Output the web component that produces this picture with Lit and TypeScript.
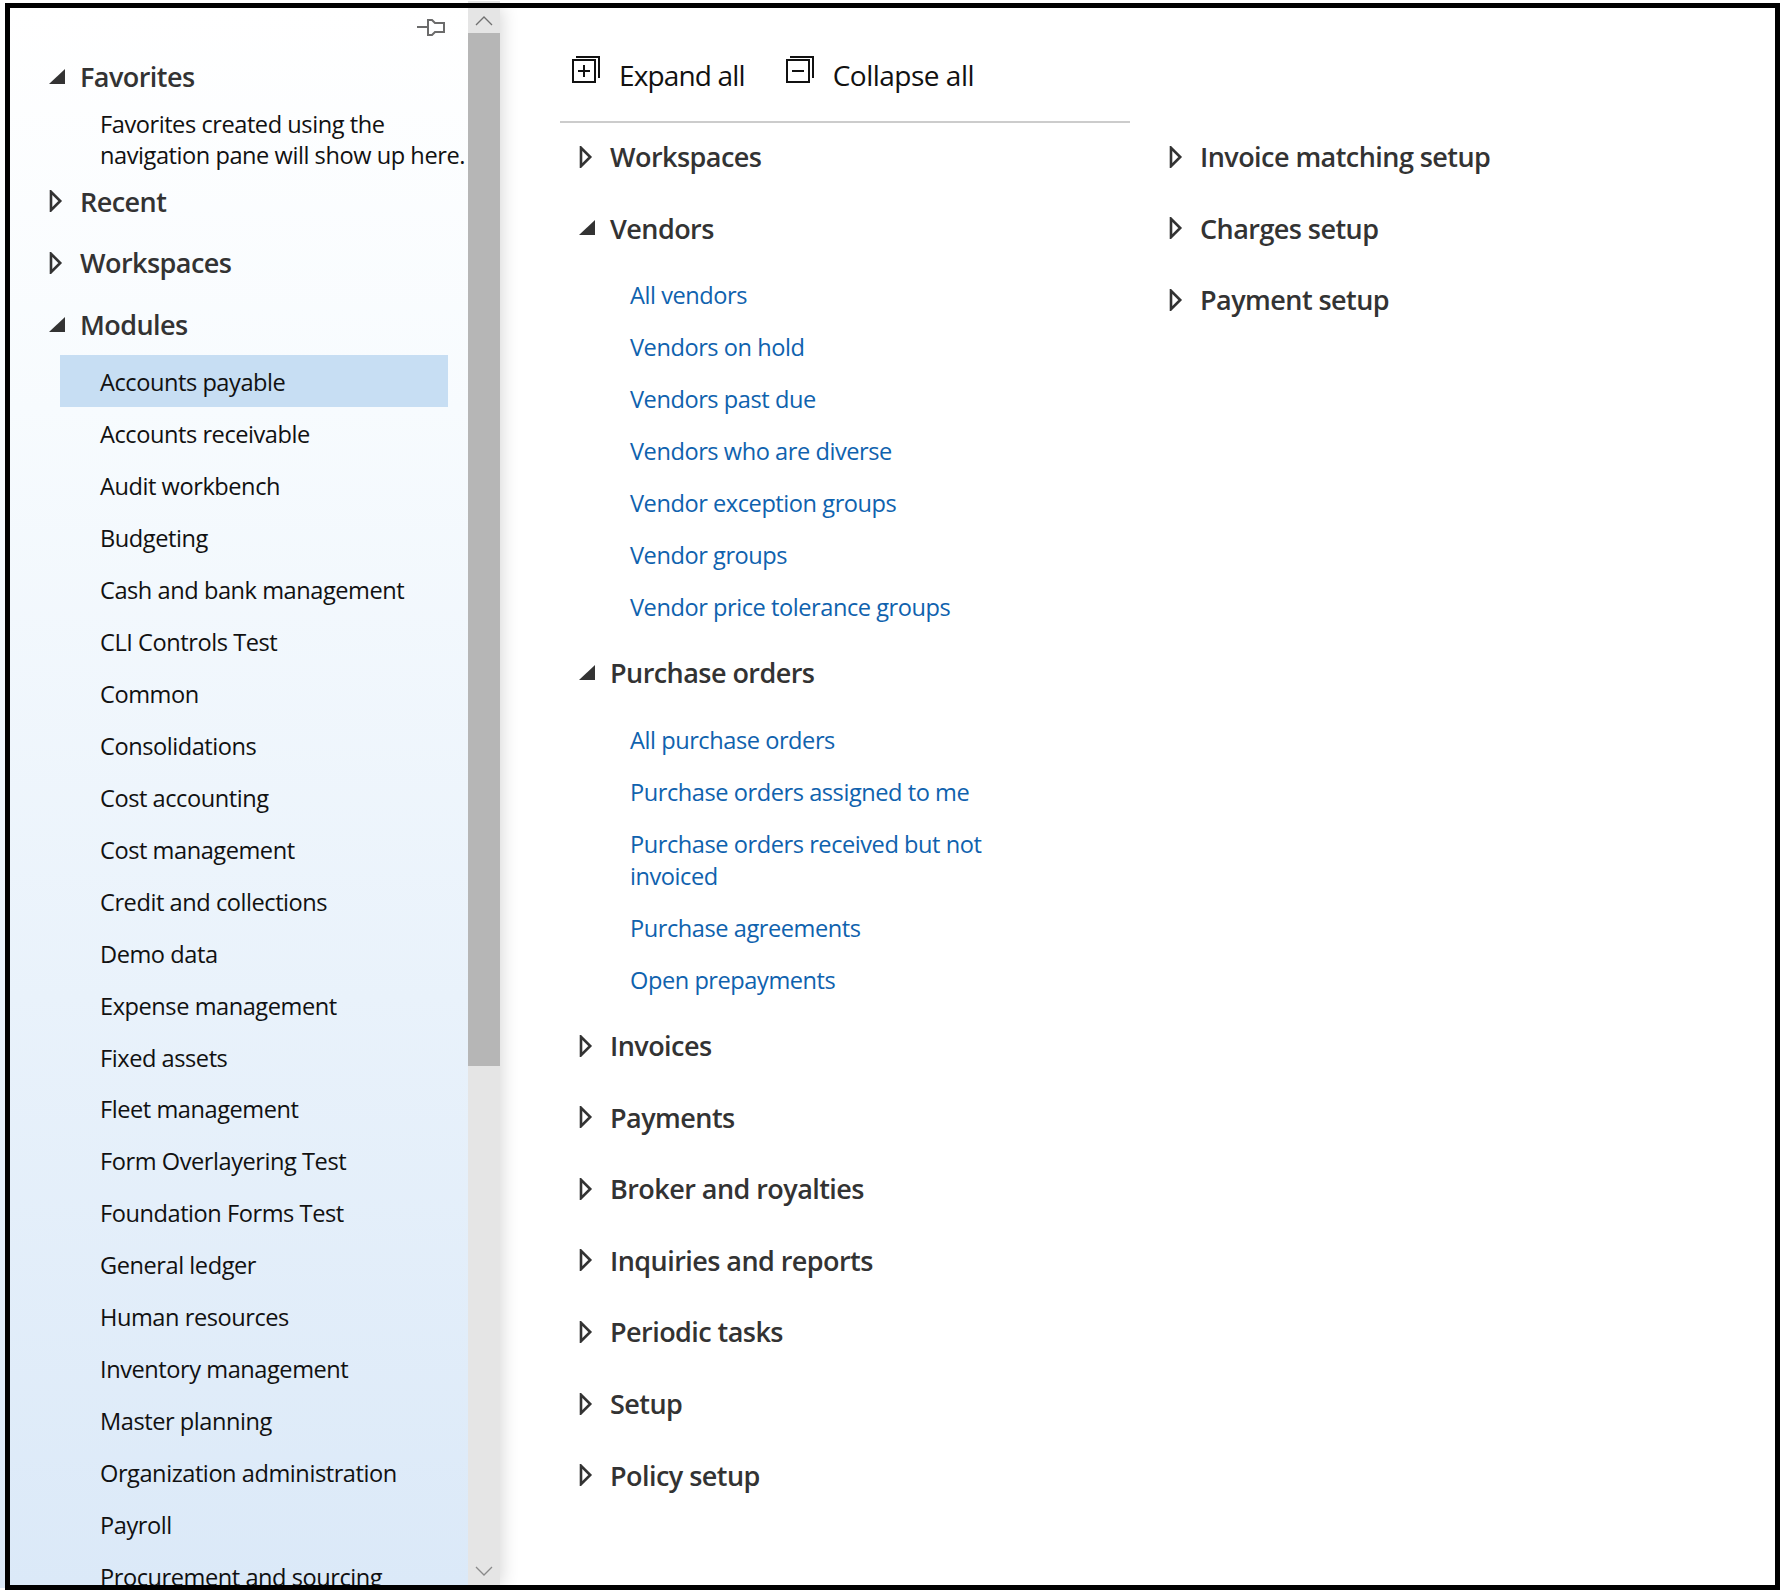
import { LitElement, html, css, svg } from "lit";
import { customElement } from "lit/decorators.js";

const modules = [
  "Accounts payable", "Accounts receivable", "Audit workbench", "Budgeting",
  "Cash and bank management", "CLI Controls Test", "Common", "Consolidations",
  "Cost accounting", "Cost management", "Credit and collections", "Demo data",
  "Expense management", "Fixed assets", "Fleet management", "Form Overlayering Test",
  "Foundation Forms Test", "General ledger", "Human resources", "Inventory management",
  "Master planning", "Organization administration", "Payroll", "Procurement and sourcing",
];

const vendors = [
  "All vendors", "Vendors on hold", "Vendors past due", "Vendors who are diverse",
  "Vendor exception groups", "Vendor groups", "Vendor price tolerance groups",
];

const purchaseOrders = [
  "All purchase orders", "Purchase orders assigned to me",
  "Purchase orders received but not invoiced", "Purchase agreements", "Open prepayments",
];

const arrowRight = svg`<svg class="arrow" width="16" height="22" viewBox="0 0 16 22"><path d="M2 1.8 L2 20.2 L11.2 11 Z" fill="none" stroke="#333" stroke-width="2.6"/></svg>`;
const arrowDown = svg`<svg class="arrow" width="16" height="22" viewBox="0 0 16 22"><path d="M0 18 L16 18 L16 3 Z" fill="#333"/></svg>`;

@customElement("app-root")
export class AppRoot extends LitElement {
  static styles = css`
    :host {
      display: block;
      width: 1780px;
      height: 1593px;
      background: #fff;
      font-family: "Open Sans", "Noto Sans", sans-serif;
    }
    * { box-sizing: border-box; }
    .page { display: flex; height: 1593px; position: relative; }
    .edge {
      width: 5px;
      height: 1588px;
      background: linear-gradient(#fff 0, #f7fbfe 400px, #dbe9f8 100%);
    }
    .scroll-tip {
      position: absolute;
      left: 468px;
      top: 1px;
      width: 32px;
      height: 2px;
      background: #e5e5e5;
    }
    .frame {
      flex: 1;
      margin: 3px 0;
      border: 5px solid #000;
      display: flex;
      overflow: hidden;
    }
    .pane {
      width: 490px;
      flex: none;
      display: flex;
      position: relative;
      z-index: 1;
      box-shadow: 2px 0 16px rgba(0, 0, 0, 0.16);
    }
    .nav {
      width: 458px;
      overflow: hidden;
      background: linear-gradient(#fff 0, #f7fbfe 400px, #dbe9f8 100%);
    }
    .pin-row {
      height: 38px;
      display: flex;
      align-items: center;
      justify-content: flex-end;
      padding: 0 22px 1px 0;
    }
    .nav-head {
      height: 61.6px;
      display: flex;
      align-items: center;
      padding-left: 39px;
      font-size: 27px;
      font-weight: 600;
      color: #333;
      letter-spacing: -0.55px;
      white-space: nowrap;
    }
    .nav-head .arrow { margin-right: 15px; flex: none; }
    .note {
      padding: 1px 0 0 90px;
      font-size: 23.6px;
      line-height: 31px;
      color: #111;
      white-space: nowrap;
      letter-spacing: -0.45px;
    }
    .item {
      height: 51.95px;
      margin: 0 20px 0 50px;
      padding: 2px 0 0 40px;
      display: flex;
      align-items: center;
      font-size: 23.6px;
      color: #111;
      white-space: nowrap;
      letter-spacing: -0.45px;
    }
    .item.selected { background: #c7def3; }
    .scrollbar {
      width: 32px;
      flex: none;
      display: flex;
      flex-direction: column;
      background: #e5e5e5;
    }
    .scroll-btn {
      height: 25px;
      display: flex;
      align-items: center;
      justify-content: center;
      flex: none;
    }
    .thumb { height: 1033px; background: #b6b6b6; flex: none; }
    .scroll-gap { flex: 1; }
    .scroll-btn.down { height: 28px; }
    main { flex: 1; padding-left: 60px; background: #fff; }
    .toolbar {
      width: 570px;
      height: 115px;
      border-bottom: 2px solid #ccc;
      display: flex;
      align-items: center;
      padding: 20px 0 0 12px;
      font-size: 28px;
      color: #111;
      letter-spacing: -0.5px;
    }
    .tool { display: flex; align-items: center; margin-right: 41px; }
    .tool svg { margin: -10px 19px 0 0; }
    .tool .tight { letter-spacing: -0.85px; }
    .columns { display: flex; margin-top: -2px; }
    .col-a { width: 609px; padding-left: 19px; }
    .col-b { flex: 1; }
    .head {
      height: 71.6px;
      display: flex;
      align-items: center;
      font-size: 27px;
      font-weight: 600;
      color: #333;
      letter-spacing: -0.55px;
    }
    .head .arrow { margin-right: 15px; flex: none; }
    .links { padding: 5px 0 4px 51px; }
    .link {
      width: 390px;
      padding: 10px 0;
      font-size: 23.6px;
      line-height: 32px;
      color: #0f62ae;
      letter-spacing: -0.45px;
    }
  `;

  private head(label: string, open = false) {
    return html`<div class="head">${open ? arrowDown : arrowRight}<span>${label}</span></div>`;
  }

  private navHead(label: string, open = false) {
    return html`<div class="nav-head">${open ? arrowDown : arrowRight}<span>${label}</span></div>`;
  }

  render() {
    return html`
      <div class="page">
        <div class="edge"></div>
        <div class="scroll-tip"></div>
        <div class="frame">
          <div class="pane">
            <div class="nav">
              <div class="pin-row">
                <svg width="29" height="18" viewBox="0 0 29 18" fill="none" stroke="#6b6b6b" stroke-width="2">
                  <path d="M0 9 H11 M11 2 H15 L18 5 H27 V14 H18 L15 17 H11 Z"/>
                </svg>
              </div>
              ${this.navHead("Favorites", true)}
              <div class="note">Favorites created using the<br />navigation pane will show up here.</div>
              ${this.navHead("Recent")}
              ${this.navHead("Workspaces")}
              ${this.navHead("Modules", true)}
              ${modules.map((m, i) => html`<div class="item ${i === 0 ? "selected" : ""}">${m}</div>`)}
            </div>
            <div class="scrollbar">
              <div class="scroll-btn">
                <svg width="18" height="10" viewBox="0 0 18 10" fill="none" stroke="#707070" stroke-width="1.3"><path d="M1 9 L9 1 L17 9"/></svg>
              </div>
              <div class="thumb"></div>
              <div class="scroll-gap"></div>
              <div class="scroll-btn down">
                <svg width="18" height="10" viewBox="0 0 18 10" fill="none" stroke="#8a8a8a" stroke-width="1.3"><path d="M1 1 L9 9 L17 1"/></svg>
              </div>
            </div>
          </div>
          <main>
            <div class="toolbar">
              <div class="tool">
                <svg width="28" height="27" viewBox="0 0 28 27" fill="none" stroke="#111" stroke-width="2">
                  <path d="M4 1 H27 V22"/>
                  <rect x="1" y="4" width="22" height="22"/>
                  <path d="M12 9 V21 M6 15 H18"/>
                </svg>
                <span class="tight">Expand all</span>
              </div>
              <div class="tool">
                <svg width="28" height="27" viewBox="0 0 28 27" fill="none" stroke="#111" stroke-width="2">
                  <path d="M4 1 H27 V22"/>
                  <rect x="1" y="4" width="22" height="22"/>
                  <path d="M6 15 H18"/>
                </svg>
                <span>Collapse all</span>
              </div>
            </div>
            <div class="columns">
              <div class="col-a">
                ${this.head("Workspaces")}
                ${this.head("Vendors", true)}
                <div class="links">${vendors.map((l) => html`<div class="link">${l}</div>`)}</div>
                ${this.head("Purchase orders", true)}
                <div class="links">${purchaseOrders.map((l) => html`<div class="link">${l}</div>`)}</div>
                ${this.head("Invoices")}
                ${this.head("Payments")}
                ${this.head("Broker and royalties")}
                ${this.head("Inquiries and reports")}
                ${this.head("Periodic tasks")}
                ${this.head("Setup")}
                ${this.head("Policy setup")}
              </div>
              <div class="col-b">
                ${this.head("Invoice matching setup")}
                ${this.head("Charges setup")}
                ${this.head("Payment setup")}
              </div>
            </div>
          </main>
        </div>
      </div>
    `;
  }
}
